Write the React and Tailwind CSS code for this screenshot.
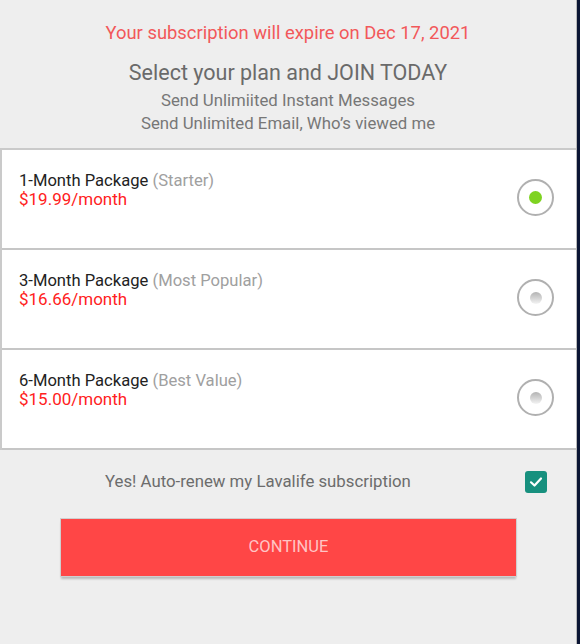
import React from "react";

const plans = [
  { title: "1-Month Package", tag: "(Starter)", price: "$19.99/month", selected: true },
  { title: "3-Month Package", tag: "(Most Popular)", price: "$16.66/month", selected: false },
  { title: "6-Month Package", tag: "(Best Value)", price: "$15.00/month", selected: false },
];

function Radio({ selected }) {
  return (
    <div className="w-[37px] h-[37px] rounded-full border-2 border-[#b0b0b0] bg-white flex items-center justify-center">
      {selected ? (
        <div className="w-[13px] h-[13px] rounded-full bg-[#7ed321]" />
      ) : (
        <div className="w-[12px] h-[12px] rounded-full bg-gradient-to-b from-[#b3b3b3] to-[#f4f4f4]" />
      )}
    </div>
  );
}

export default function App() {
  return (
    <div
      className="w-[580px] h-[644px] flex overflow-hidden"
      style={{ fontFamily: "Roboto, 'Liberation Sans', sans-serif" }}
    >
      <div className="w-[577px] h-full bg-[#eeeeee] border-r border-[#b9b9b9] flex flex-col">
        <div className="pt-[22px] text-center">
          <div className="text-[18.4px] leading-[22px] text-[#f2585a]">
            Your subscription will expire on Dec 17, 2021
          </div>
          <div className="mt-[17px] text-[21.5px] leading-[24px] text-[#6a6a6a]">
            Select your plan and JOIN TODAY
          </div>
          <div className="mt-[4px] text-[16.8px] leading-[23px] text-[#777777]">
            Send Unlimiited Instant Messages
          </div>
          <div className="text-[16.8px] leading-[23px] text-[#777777]">
            Send Unlimited Email, Who’s viewed me
          </div>
        </div>

        <div className="mt-[13px] bg-white border-t-2 border-l-2 border-[#cacaca]">
          {plans.map((p) => (
            <div
              key={p.title}
              className="h-[100px] border-b-2 border-[#c6c6c6] flex items-start justify-between pl-[17px] pr-[22px]"
            >
              <div className="pt-[21px]">
                <div className="text-[16.6px] leading-[19px] text-[#222222]">
                  {p.title} <span className="text-[#a0a0a0]">{p.tag}</span>
                </div>
                <div className="text-[17px] leading-[19px] text-[#ff2121]">{p.price}</div>
              </div>
              <div className="self-center pb-[3px]">
                <Radio selected={p.selected} />
              </div>
            </div>
          ))}
        </div>

        <div className="mt-[21px] h-[22px] flex items-center justify-between pl-[105px] pr-[29px]">
          <span className="text-[16.8px] text-[#6c6c6c]">Yes! Auto-renew my Lavalife subscription</span>
          <div className="w-[22px] h-[22px] rounded-[3px] bg-[#17907e] flex items-center justify-center">
            <svg width="16" height="16" viewBox="0 0 16 16" fill="none">
              <path d="M3 8.3 L6.5 11.5 L13 4.5" stroke="white" strokeWidth="2.2" strokeLinecap="round" strokeLinejoin="round" />
            </svg>
          </div>
        </div>

        <button className="mt-[26px] ml-[61px] w-[455px] h-[57px] bg-[#ff4646] text-[16.5px] text-[#ffc4c4] shadow-[0_0_0_1px_#cfcfcf,0_3px_2px_rgba(0,0,0,0.22)]">
          CONTINUE
        </button>
      </div>
      <div className="flex-1 h-full bg-[#0b1534]" />
    </div>
  );
}
